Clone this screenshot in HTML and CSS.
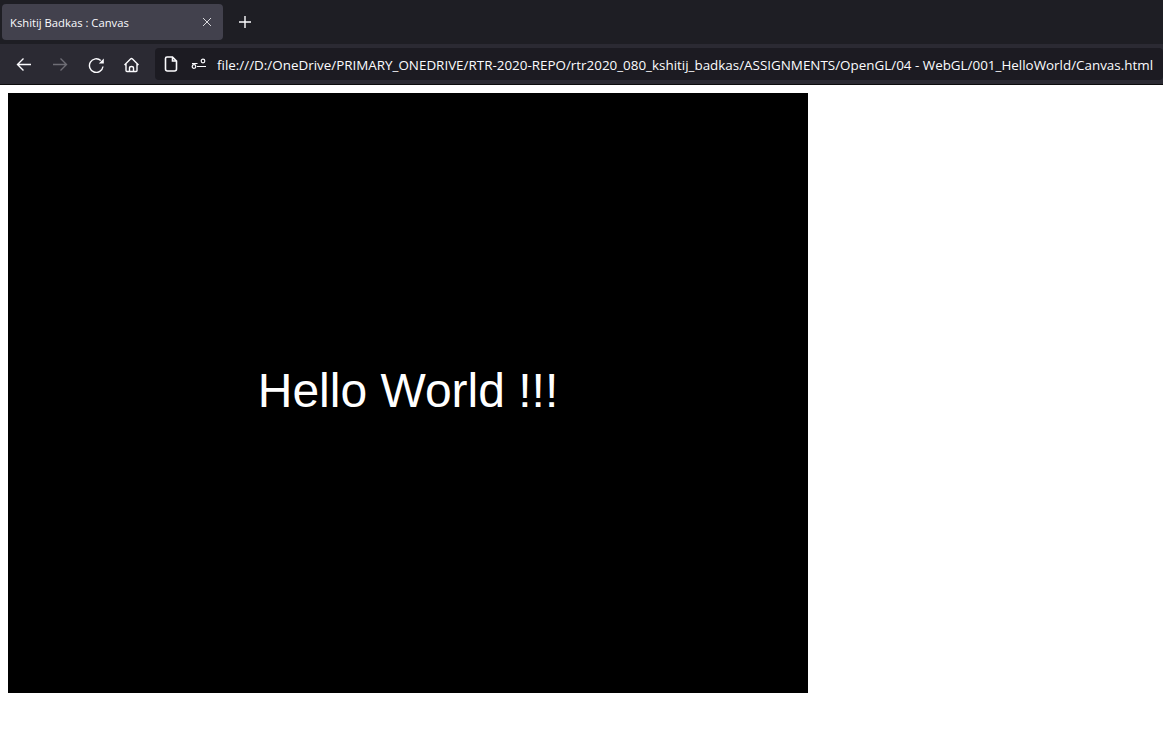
FILE: index.html
```html
<!doctype html>
<html>

<head>
	<meta charset="UTF-8">
	<title>Kshitij Badkas : Canvas</title>
	<link rel="stylesheet" href="styles.css">
</head>

<body>
	<div class="tabstrip">
		<div class="tab">
			<span class="tab_title">Kshitij Badkas : Canvas</span>
			<svg class="tab_close" width="10" height="10" viewBox="0 0 10 10"><path d="M1 1L9 9M9 1L1 9" /></svg>
		</div>
		<svg class="new_tab" width="14" height="14" viewBox="0 0 14 14"><path d="M7 1V13M1 7H13" /></svg>
	</div>
	<div class="toolbar">
		<svg class="nav" width="18" height="18" viewBox="0 0 18 18"><path d="M16 9.500H2.500M8.500 3.500L2.500 9.500L8.500 15.500" /></svg>
		<svg class="nav nav_off" width="18" height="18" viewBox="0 0 18 18"><path d="M2 9.500H15.500M9.500 3.500L15.500 9.500L9.500 15.500" /></svg>
		<svg class="nav" width="18" height="18" viewBox="0 0 18 18"><path d="M16 11.500A6.800 6.800 0 1 1 13.800 5.500" /><path class="solid" d="M16.800 3.500V8.500H11.800Z" /></svg>
		<svg class="nav" width="18" height="18" viewBox="0 0 18 18"><path d="M1.500 10L7.500 4Q8.500 3 9.500 4L15.500 10M3 9V15.500Q3 16.500 4 16.500H13Q14 16.500 14 15.500V9M6.500 16.500V13Q6.500 11.500 8.500 11.500Q10.500 11.500 10.500 13V16.500" /></svg>
		<div class="address">
			<svg class="page_icon" width="14" height="16" viewBox="0 0 14 16"><path d="M3 1H8.500L12.500 5V13Q12.500 15 10.500 15H3.500Q1.500 15 1.500 13V2.500Q1.500 1 3 1ZM8.500 1V5H12.500" /></svg>
			<svg class="site_icon" width="16" height="12" viewBox="0 0 16 12"><path d="M1 5.500H6.500M6 8.500H15" /><circle cx="12" cy="3" r="1.800" /><circle cx="3" cy="8.500" r="1.800" /></svg>
			<span class="url">file:///D:/OneDrive/PRIMARY_ONEDRIVE/RTR-2020-REPO/rtr2020_080_kshitij_badkas/ASSIGNMENTS/OpenGL/04 - WebGL/001_HelloWorld/Canvas.html</span>
		</div>
	</div>
	<div class="page">
		<div class="canvas">Hello World !!!</div>
	</div>
</body>

</html>
```

FILE: styles.css
```css
body {
	margin: 0;
	background: #fff;
	font-family: "Open Sans", "Noto Sans", sans-serif;
	overflow: hidden;
}

.tabstrip {
	height: 44px;
	box-sizing: border-box;
	padding: 4px 2px;
	background: #1e1e24;
	display: flex;
	align-items: center;
}

.tab {
	width: 221px;
	height: 36px;
	box-sizing: border-box;
	padding: 0 11px 0 8px;
	background: #42414d;
	border-radius: 4px;
	display: flex;
	align-items: center;
	justify-content: space-between;
}

.tab_title {
	color: #fbfbfe;
	font-size: 11.25px;
}

.tab_close path {
	stroke: #d8d8dc;
	stroke-width: 1;
	fill: none;
}

.new_tab {
	margin-left: 15px;
}

.new_tab path {
	stroke: #fbfbfe;
	stroke-width: 1.400;
	fill: none;
}

.toolbar {
	height: 41px;
	box-sizing: border-box;
	padding: 4px 0 4px 15px;
	background: #2b2a33;
	border-bottom: 1px solid #0c0c0d;
	display: flex;
	align-items: center;
}

.nav {
	margin-right: 18px;
	flex: none;
}

.nav path {
	stroke: #fbfbfe;
	stroke-width: 1.400;
	fill: none;
}

.nav path.solid {
	fill: #fbfbfe;
	stroke: none;
}

.nav_off path {
	stroke: #6e6d75;
}

.address {
	margin-left: -4px;
	flex: 1;
	height: 32px;
	background: #1c1b22;
	border-radius: 4px;
	display: flex;
	align-items: center;
	padding-left: 9px;
}

.page_icon path,
.site_icon path,
.site_icon circle {
	stroke: #fbfbfe;
	stroke-width: 1.200;
	fill: none;
}

.page_icon path {
	stroke-width: 1.600;
}

.site_icon {
	margin-left: 13px;
	margin-right: 10px;
}

.url {
	color: #fbfbfe;
	font-size: 13.42px;
	padding-top: 2px;
	white-space: nowrap;
}

.page {
	padding: 8px;
}

.canvas {
	width: 800px;
	height: 600px;
	box-sizing: border-box;
	padding-bottom: 6px;
	background: #000;
	color: #fff;
	font-family: "Liberation Sans", Arial, sans-serif;
	font-size: 48px;
	display: flex;
	align-items: center;
	justify-content: center;
}
```
